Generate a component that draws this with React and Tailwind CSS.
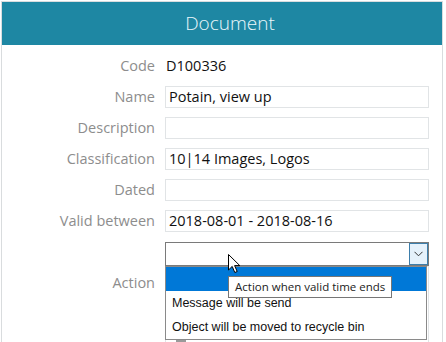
const labelCls = "text-right text-[14.5px] text-[#8d8d8d] leading-[22px] pr-[10px]";
const boxCls = "h-[22px] border border-[#e1e4e6] bg-white px-[3px] text-[14.5px] leading-[20px] text-[#111]";

const rows = [
  { label: "Code", value: "D100336", plain: true },
  { label: "Name", value: "Potain, view up" },
  { label: "Description", value: "" },
  { label: "Classification", value: "10|14 Images, Logos" },
  { label: "Dated", value: "" },
  { label: "Valid between", value: "2018-08-01 - 2018-08-16" },
];

function Cursor() {
  return (
    <svg width="13" height="20" viewBox="0 0 13 20" className="absolute left-[63px] top-[12px]">
      <path d="M0.5 0.5 L0.5 16 L4.2 12.4 L6.8 18.5 L9.2 17.5 L6.6 11.6 L11.8 11.6 Z" fill="#fff" stroke="#000" strokeWidth="1" strokeLinejoin="round" />
    </svg>
  );
}

export default function App() {
  return (
    <div className="w-[446px] h-[342px] bg-white p-px overflow-hidden" style={{ fontFamily: '"Open Sans", "Noto Sans", sans-serif' }}>
      <div className="w-[442px] h-[345px] border border-[#d9dcde] bg-white">
        <div className="h-[43px] bg-[#1e87a3] flex items-center justify-center pl-[16px]">
          <span className="text-[19px] font-light text-[#eaf7fb]">Document</span>
        </div>
        <div className="pt-[10px] flex flex-col gap-[9px]">
          {rows.map(r => (
            <div key={r.label} className="grid grid-cols-[163px_264px]">
              <div className={labelCls}>{r.label}</div>
              {r.plain
                ? <div className="h-[22px] px-px text-[14.5px] leading-[22px] text-[#111]">{r.value}</div>
                : <div className={boxCls}>{r.value}</div>}
            </div>
          ))}
          <div className="grid grid-cols-[163px_264px] mt-px">
            <div className={labelCls + " pt-[30px]"}>Action</div>
            <div className="relative">
              <div className="h-[24px] border border-[#7a7a7a] bg-white flex justify-end">
                <div className="w-[19px] h-[22px] bg-[#e5f1fb] border border-[#3d7eab] flex items-center justify-center">
                  <svg width="9" height="6" viewBox="0 0 9 6">
                    <path d="M0.5 0.8 L4.5 4.8 L8.5 0.8" fill="none" stroke="#333" strokeWidth="1" />
                  </svg>
                </div>
              </div>
              <div className="h-[80px] border border-[#e1e4e6] bg-white">
                <div className="mt-[72px] ml-[10px] w-[10px] h-[8px] bg-[#9a9a9a]" />
              </div>
              <div className="absolute left-0 top-[24px] w-[262px] border border-[#8a8a8a] bg-white" style={{ fontFamily: '"Liberation Sans", Arial, sans-serif' }}>
                <div className="h-[24px] bg-[#0078d7]" />
                <div className="h-[24px] pl-[6px] text-[12.5px] leading-[24px] text-[#111]">Message will be send</div>
                <div className="h-[24px] pl-[6px] text-[12.5px] leading-[24px] text-[#111]">Object will be moved to recycle bin</div>
              </div>
              <div className="absolute left-[63px] top-[34px] h-[22px] px-[6px] border border-[#767676] bg-white text-[11.5px] leading-[20px] text-[#222] whitespace-nowrap">
                Action when valid time ends
              </div>
              <Cursor />
            </div>
          </div>
        </div>
      </div>
    </div>
  );
}
